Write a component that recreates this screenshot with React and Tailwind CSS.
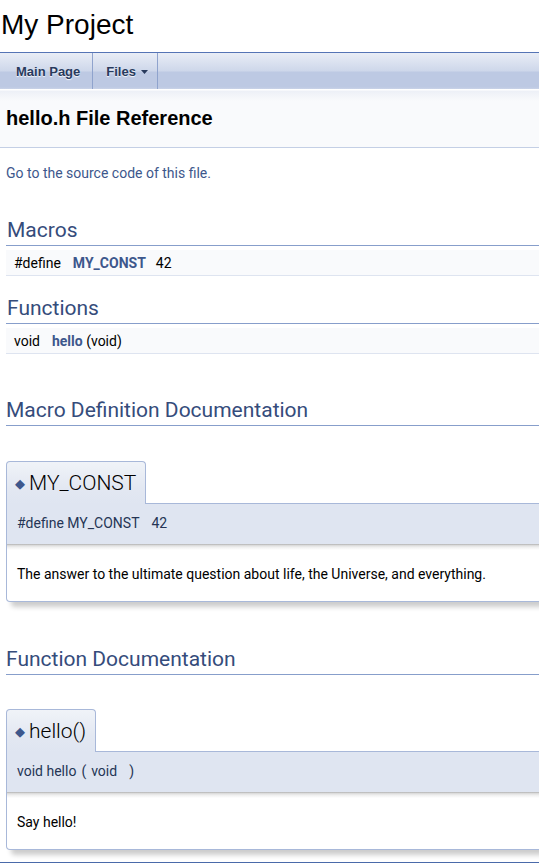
import React from "react";

function Heading({ children, className = "" }) {
  return (
    <div
      className={
        "h-[28px] border-b border-[#879ecb] pb-[3px] text-[21px] leading-[24px] text-[#354c7b] " +
        className
      }
    >
      {children}
    </div>
  );
}

function MemItem({ title, proto, doc, className = "" }) {
  return (
    <div className={"ml-[6px] -mr-[30px] " + className}>
      <div className="flex">
        <div className="relative z-10 -mb-[1px] h-[43px] rounded-t-[4px] border-x border-t border-[#a8b8d9] bg-[linear-gradient(to_bottom,#f0f3f8_0%,#e3e8f2_60%,#dfe5f1_100%)] pl-[8px] pr-[9px] pt-[8px] text-[21px] font-light leading-[26px] text-black">
          <span className="mr-[4px] align-middle text-[13px] text-[#3d578c]">◆</span>
          {title}
        </div>
      </div>
      <div className="h-[41px] border-x border-t border-[#a8b8d9] bg-[#dfe5f1] pl-[10px] pt-[8px] text-[14px] leading-[22px] text-[#253555] shadow-[5px_5px_5px_rgba(0,0,0,0.15)]">
        {proto}
      </div>
      <div className="h-[58px] rounded-bl-[4px] border-x border-b border-[#a8b8d9] bg-[linear-gradient(to_bottom,#a9a9a9_0px,#d6d6d6_1px,#eeeeee_3px,#ffffff_6px)] pl-[10px] pt-[19px] text-[14px] leading-[22px] text-black shadow-[5px_5px_5px_rgba(0,0,0,0.2)]">
        {doc}
      </div>
    </div>
  );
}

export default function App() {
  return (
    <div className="min-h-[865px] w-full overflow-hidden bg-white font-['Roboto','Liberation_Sans',sans-serif] text-[14px] leading-[22px] text-black">
      <div className="h-[52px] pl-[1px] pt-[9px] font-['Liberation_Sans',Arial,sans-serif] text-[28px] leading-[32px]">
        My Project
      </div>

      <nav className="flex h-[37px] border-t border-[#5574b5] bg-[linear-gradient(to_bottom,#e9edf6_0px,#ced7ea_18px,#bdc9e3_19px,#bdc9e3_34px,#cad3e8_36px)] pl-[4px] font-['Liberation_Sans',Arial,sans-serif] text-[13px] font-bold text-[#283a5d] [text-shadow:0_1px_1px_rgba(255,255,255,0.9)]">
        <div className="border-r border-[#8fa3cd] px-[12px] pt-[2px] leading-[34px]">Main Page</div>
        <div className="flex items-start border-r border-[#8fa3cd] pl-[13px] pr-[9px] pt-[2px] leading-[34px]">
          <span>Files</span>
          <svg className="ml-[5px] mt-[15px]" width="7" height="4" viewBox="0 0 7 4">
            <polygon points="0,0 7,0 3.5,4" fill="#283a5d" />
          </svg>
        </div>
      </nav>

      <div className="h-[59px] border-b border-[#c4cfe5] bg-[linear-gradient(to_bottom,#ffffff_0px,#ffffff_1px,#edf0f7_2px,#f9fafc_12px)] pl-[6px] pt-[15px]">
        <div className="font-['Liberation_Sans',Arial,sans-serif] text-[20px] font-bold leading-[28px]">
          hello.h File Reference
        </div>
      </div>

      <div className="mt-[14px] pl-[6px] text-[#3d578c]">Go to the source code of this file.</div>

      <div className="ml-[6px]">
        <Heading className="mt-[34px] pl-[1px]">Macros</Heading>
        <div className="mt-[4px] h-[26px] border-b border-[#dee4f0] bg-[#f9fafc] pl-[8px] pt-[2px]">
          <span>#define</span>
          <span className="ml-[12px] font-bold text-[#3d578c]">MY_CONST</span>
          <span className="ml-[10px]">42</span>
        </div>

        <Heading className="mt-[20px] pl-[1px]">Functions</Heading>
        <div className="mt-[4px] h-[26px] border-b border-[#dee4f0] bg-[#f9fafc] pl-[8px] pt-[2px]">
          <span>void</span>
          <span className="ml-[12px] font-bold text-[#3d578c]">hello</span>
          <span> (void)</span>
        </div>

        <Heading className="mt-[44px]">Macro Definition Documentation</Heading>
      </div>

      <MemItem
        className="mt-[35px]"
        title="MY_CONST"
        proto={
          <>
            <span>#define MY_CONST</span>
            <span className="ml-[12px]">42</span>
          </>
        }
        doc="The answer to the ultimate question about life, the Universe, and everything."
      />

      <div className="ml-[6px]">
        <Heading className="mt-[45px]">Function Documentation</Heading>
      </div>

      <MemItem
        className="mt-[34px]"
        title="hello()"
        proto={
          <>
            <span>void hello</span>
            <span className="ml-[5px]">(</span>
            <span className="ml-[5px]">void</span>
            <span className="ml-[12px]">)</span>
          </>
        }
        doc="Say hello!"
      />

      <div className="mt-[12px] h-[1px] border-t border-[#4a6aaa]" />
    </div>
  );
}
